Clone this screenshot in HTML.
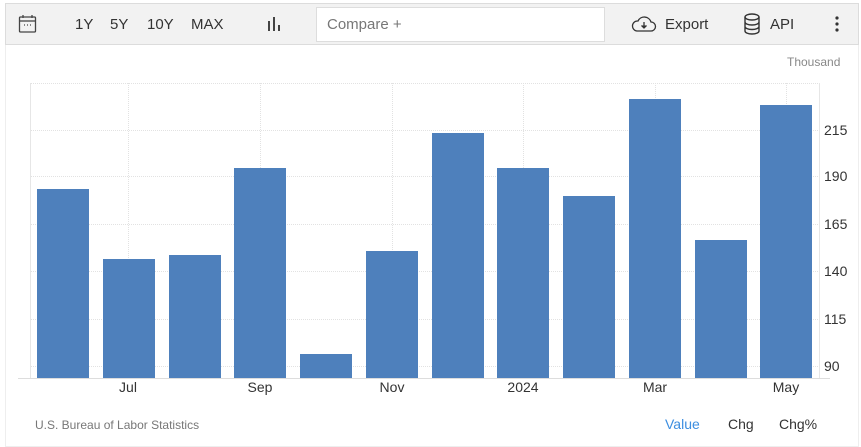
<!DOCTYPE html>
<html><head><style>
body{margin:0;width:861px;height:447px;background:#fff;font-family:"Liberation Sans",sans-serif;position:relative;overflow:hidden}
.a{position:absolute}
.tb{left:5px;top:3px;width:852px;height:40px;background:#f2f2f2;border:1px solid #dcdcdc}
.t{font-size:15px;color:#333;top:16px}
.bar{position:absolute;background:#4e80bc;width:52px;bottom:69px}
.yl{position:absolute;left:824px;font-size:14px;color:#333}
.xl{position:absolute;top:379px;font-size:14px;color:#333;width:60px;text-align:center}
.hg{position:absolute;left:30px;width:790px;border-top:1px dotted #e2e2e2}
.vg{position:absolute;top:83px;height:295px;border-left:1px dotted #e2e2e2}
</style></head><body>
<div class="a" style="left:5px;top:3px;width:852px;height:443px;border:1px solid #eee;border-top:none"></div>
<div class="a tb"></div>
<svg class="a" style="left:18px;top:14px" width="20" height="20" viewBox="0 0 20 20" fill="none" stroke="#444" stroke-width="1.3"><rect x="1.5" y="3" width="16" height="15" rx="1"/><line x1="1.5" y1="7" x2="17.5" y2="7"/><line x1="5" y1="1" x2="5" y2="4"/><line x1="14" y1="1" x2="14" y2="4"/><line x1="6" y1="11" x2="7" y2="11"/><line x1="9" y1="11" x2="10" y2="11"/><line x1="12" y1="11" x2="13" y2="11"/></svg>
<div class="a t" style="left:75px">1Y</div>
<div class="a t" style="left:110px">5Y</div>
<div class="a t" style="left:147px">10Y</div>
<div class="a t" style="left:191px">MAX</div>
<svg class="a" style="left:266px;top:16px" width="16" height="16"><rect x="2" y="5" width="2" height="10" fill="#444"/><rect x="7" y="1" width="2" height="14" fill="#444"/><rect x="12" y="9" width="2" height="6" fill="#444"/></svg>
<div class="a" style="left:316px;top:7px;width:287px;height:33px;background:#fff;border:1px solid #ddd"></div>
<div class="a" style="left:327px;top:16px;font-size:15px;color:#777">Compare +</div>
<svg class="a" style="left:631px;top:15px" width="26" height="18" viewBox="0 0 26 18" fill="none" stroke="#333" stroke-width="1.3"><path d="M6 16h14a4.5 4.5 0 0 0 0-9 7 7 0 0 0-13-1A5 5 0 0 0 6 16z"/><path d="M13 7v6M10.5 10.5l2.5 2.5 2.5-2.5" fill="#333"/></svg>
<div class="a t" style="left:665px">Export</div>
<svg class="a" style="left:743px;top:13px" width="18" height="22" viewBox="0 0 18 22" fill="none" stroke="#333" stroke-width="1.4"><ellipse cx="9" cy="4" rx="7" ry="3"/><path d="M2 4v14c0 1.7 3 3 7 3s7-1.3 7-3V4M2 9c0 1.7 3 3 7 3s7-1.3 7-3M2 13.5c0 1.7 3 3 7 3s7-1.3 7-3"/></svg>
<div class="a t" style="left:770px">API</div>
<svg class="a" style="left:834px;top:16px" width="6" height="16"><circle cx="3" cy="2" r="1.6" fill="#333"/><circle cx="3" cy="8" r="1.6" fill="#333"/><circle cx="3" cy="14" r="1.6" fill="#333"/></svg>
<div class="a" style="left:787px;top:55px;font-size:12px;color:#888">Thousand</div>
<div class="hg" style="top:83px"></div>
<div class="hg" style="top:130px"></div>
<div class="hg" style="top:176px"></div>
<div class="hg" style="top:224px"></div>
<div class="hg" style="top:271px"></div>
<div class="hg" style="top:319px"></div>
<div class="hg" style="top:366px"></div>
<div class="vg" style="left:30px;border-left:1px solid #e6e6e6"></div>
<div class="vg" style="left:128px"></div><div class="vg" style="left:260px"></div><div class="vg" style="left:392px"></div><div class="vg" style="left:523px"></div><div class="vg" style="left:655px"></div><div class="vg" style="left:786px"></div>
<div class="a" style="left:819px;top:83px;height:295px;border-left:1px solid #e6e6e6"></div>
<div class="bar" style="left:37px;top:189px"></div>
<div class="bar" style="left:103px;top:259px"></div>
<div class="bar" style="left:169px;top:255px"></div>
<div class="bar" style="left:234px;top:168px"></div>
<div class="bar" style="left:300px;top:354px"></div>
<div class="bar" style="left:366px;top:251px"></div>
<div class="bar" style="left:432px;top:133px"></div>
<div class="bar" style="left:497px;top:168px"></div>
<div class="bar" style="left:563px;top:196px"></div>
<div class="bar" style="left:629px;top:99px"></div>
<div class="bar" style="left:695px;top:240px"></div>
<div class="bar" style="left:760px;top:105px"></div>
<div class="a" style="left:18px;top:378px;width:812px;border-top:1px solid #ddd"></div>
<div class="yl" style="top:122px">215</div>
<div class="yl" style="top:168px">190</div>
<div class="yl" style="top:216px">165</div>
<div class="yl" style="top:263px">140</div>
<div class="yl" style="top:311px">115</div>
<div class="yl" style="top:358px">90</div>
<div class="xl" style="left:98px">Jul</div>
<div class="xl" style="left:230px">Sep</div>
<div class="xl" style="left:362px">Nov</div>
<div class="xl" style="left:493px">2024</div>
<div class="xl" style="left:625px">Mar</div>
<div class="xl" style="left:756px">May</div>
<div class="a" style="left:35px;top:418px;font-size:12px;color:#777">U.S. Bureau of Labor Statistics</div>
<div class="a" style="left:665px;top:416px;font-size:14px;color:#3c8ee0">Value</div>
<div class="a" style="left:728px;top:416px;font-size:14px;color:#333">Chg</div>
<div class="a" style="left:779px;top:416px;font-size:14px;color:#333">Chg%</div>
</body></html>
